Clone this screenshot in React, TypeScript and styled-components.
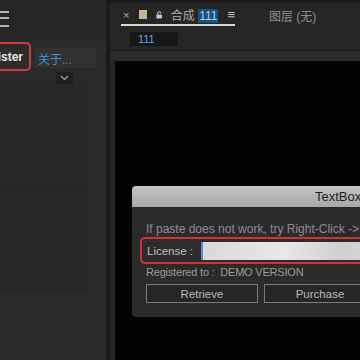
import styled, { createGlobalStyle } from "styled-components";

const GlobalStyle = createGlobalStyle`
  html, body {
    margin: 0;
    padding: 0;
    background: #000;
  }
  body {
    font-family: "Liberation Sans", "Noto Sans CJK SC", sans-serif;
  }
`;

const leftRows = [24, 20, 19, 20, 14, 5, 19, 19, 22, 18, 17];

const App = () => {
  return (
    <Screen>
      <GlobalStyle />
      <LeftPanel>
        <TopBar>
          <Hamburger>
            <span />
            <span />
            <span />
          </Hamburger>
        </TopBar>
        <TabRow>
          <RegisterTab>Register</RegisterTab>
          <AboutTab>关于...</AboutTab>
        </TabRow>
        <DropRow>
          <ChevronBox>
            <svg width="9" height="6" viewBox="0 0 9 6">
              <path d="M1 1l3.5 3.5L8 1" stroke="#9a9a9a" strokeWidth="1.3" fill="none" />
            </svg>
          </ChevronBox>
        </DropRow>
        <RowList>
          {leftRows.map((h, i) => (
            <ListRow key={i} style={{ height: h }} />
          ))}
        </RowList>
      </LeftPanel>
      <Divider />
      <RightPanel>
        <Header>
          <CompTab>
            <Close>×</Close>
            <Swatch />
            <svg width="8" height="10" viewBox="0 0 8 10">
              <path d="M2 4.5V3a2 2 0 0 1 4 0" stroke="#c8c8c8" strokeWidth="1.3" fill="none" />
              <rect x="0.5" y="4.5" width="7" height="5" rx="0.8" fill="#c8c8c8" />
            </svg>
            <TabLabel>
              合成 <Selected>111</Selected>
            </TabLabel>
            <Menu>≡</Menu>
          </CompTab>
          <LayerTab>图层 (无)</LayerTab>
        </Header>
        <SubBar>
          <CrumbBox>111</CrumbBox>
        </SubBar>
        <Band />
        <ViewerWrap>
          <Viewer>
            <Dialog>
              <TitleBar>TextBox</TitleBar>
              <DialogBody>
                <Hint>If paste does not work, try Right-Click -&gt;</Hint>
                <LicenseBox>
                  <FieldLabel>License :</FieldLabel>
                  <LicenseInput />
                </LicenseBox>
                <Registered>Registered to :&nbsp; DEMO VERSION</Registered>
                <ButtonRow>
                  <DlgButton>Retrieve</DlgButton>
                  <DlgButton>Purchase</DlgButton>
                </ButtonRow>
              </DialogBody>
            </Dialog>
          </Viewer>
        </ViewerWrap>
      </RightPanel>
    </Screen>
  );
};

const Screen = styled.div`
  width: 360px;
  height: 360px;
  display: flex;
  overflow: hidden;
  background: #000;
`;

const LeftPanel = styled.div`
  width: 106px;
  flex-shrink: 0;
  background: #2a2a2a;
  display: flex;
  flex-direction: column;
`;

const TopBar = styled.div`
  height: 41px;
  background: #272727;
  padding-top: 11px;
  box-sizing: border-box;
`;

const Hamburger = styled.div`
  width: 9px;
  display: flex;
  flex-direction: column;
  gap: 4px;

  span {
    display: block;
    height: 2px;
    background: #b4b4b4;
  }
  span:last-child {
    margin-top: 2px;
  }
`;

const TabRow = styled.div`
  height: 31px;
  display: flex;
  align-items: center;
  gap: 4px;
`;

const RegisterTab = styled.div`
  margin-left: -33px;
  height: 29px;
  padding: 0 6px 0 6px;
  display: flex;
  align-items: center;
  border: 2px solid #d23a3a;
  border-radius: 5px;
  background: #2c2c2c;
  color: #e6e6e6;
  font-size: 12px;
  font-weight: bold;
  box-sizing: border-box;
`;

const AboutTab = styled.div`
  width: 58px;
  height: 20px;
  margin-top: 3px;
  padding-left: 3px;
  display: flex;
  align-items: center;
  background: #323232;
  color: #3d8fdc;
  font-size: 12px;
`;

const DropRow = styled.div`
  height: 12px;
  display: flex;
  padding-left: 56px;
`;

const ChevronBox = styled.div`
  width: 17px;
  height: 12px;
  background: #202020;
  display: flex;
  align-items: center;
  justify-content: center;
`;

const RowList = styled.div`
  display: flex;
  flex-direction: column;
  width: 88px;
`;

const ListRow = styled.div`
  border-bottom: 1px solid #242424;
  background: #282828;
`;

const Divider = styled.div`
  width: 4px;
  flex-shrink: 0;
  background: #1a1a1a;
`;

const RightPanel = styled.div`
  flex: 1;
  min-width: 0;
  display: flex;
  flex-direction: column;
  background: #262626;
`;

const Header = styled.div`
  height: 28px;
  display: flex;
  align-items: flex-start;
  padding-left: 11px;
  box-sizing: border-box;
  border-top: 3px solid #1c1c1c;
`;

const CompTab = styled.div`
  width: 114px;
  height: 23px;
  padding-top: 2px;
  display: flex;
  align-items: center;
  gap: 9px;
  padding-left: 2px;
  box-sizing: border-box;
  border-bottom: 2px solid #d8d8d8;
`;

const Close = styled.span`
  color: #a8a8a8;
  font-size: 11px;
  margin-right: 1px;
`;

const Swatch = styled.span`
  width: 9px;
  height: 9px;
  background: #c9b28e;
`;

const TabLabel = styled.span`
  color: #a6a6a6;
  font-size: 12px;
  white-space: nowrap;
`;

const Selected = styled.span`
  background: #1c4f7e;
  color: #9fd0ff;
  padding: 0 1px;
`;

const Menu = styled.span`
  color: #c0c0c0;
  font-size: 13px;
`;

const LayerTab = styled.div`
  margin-left: 34px;
  height: 23px;
  padding-top: 2px;
  box-sizing: border-box;
  display: flex;
  align-items: center;
  color: #8e8e8e;
  font-size: 12px;
`;

const SubBar = styled.div`
  height: 23px;
  padding: 4px 0 0 20px;
  box-sizing: border-box;
  border-bottom: 1px solid #171717;
`;

const CrumbBox = styled.div`
  width: 48px;
  height: 14px;
  padding-left: 8px;
  box-sizing: border-box;
  background: #171717;
  color: #5da3e2;
  font-size: 11px;
  line-height: 14px;
`;

const Band = styled.div`
  height: 10px;
  background: #2b2b2b;
`;

const ViewerWrap = styled.div`
  flex: 1;
  padding-left: 5px;
  display: flex;
`;

const Viewer = styled.div`
  flex: 1;
  background: #030303;
  padding: 125px 0 0 17px;
  overflow: hidden;
`;

const Dialog = styled.div`
  width: 270px;
  border-radius: 4px;
  overflow: hidden;
  background: #2b2b2b;
`;

const TitleBar = styled.div`
  height: 21px;
  background: linear-gradient(#c2c2c2, #a8a8a8);
  color: #1e1e1e;
  font-size: 13px;
  line-height: 21px;
  padding-left: 183px;
`;

const DialogBody = styled.div`
  height: 110px;
  padding: 16px 0 0 8px;
  box-sizing: border-box;
  display: flex;
  flex-direction: column;
`;

const Hint = styled.div`
  color: #8e8e8e;
  font-size: 12px;
  padding-left: 6px;
  white-space: nowrap;
  line-height: 13px;
`;

const LicenseBox = styled.div`
  height: 27px;
  margin-top: 1px;
  border: 2px solid #cf3434;
  border-right: none;
  border-radius: 5px 0 0 5px;
  display: flex;
  align-items: center;
  padding-left: 5px;
  gap: 8px;
  box-sizing: border-box;
  background: #2d2b2b;
`;

const FieldLabel = styled.span`
  color: #bdbdbd;
  font-size: 11.5px;
  white-space: nowrap;
`;

const LicenseInput = styled.div`
  flex: 1;
  height: 18px;
  border-left: 2px solid #4a90e2;
  background: linear-gradient(90deg, #d9d9d9, #e8e8e8 40%, #cfcfcf 70%, #e2e2e2);
  filter: blur(0.6px);
`;

const Registered = styled.div`
  color: #9a9a9a;
  font-size: 11px;
  letter-spacing: -0.2px;
  line-height: 13px;
  padding-left: 6px;
  margin-top: 2px;
  white-space: nowrap;
`;

const ButtonRow = styled.div`
  display: flex;
  gap: 6px;
  margin-top: 5px;
  padding-left: 6px;
`;

const DlgButton = styled.div`
  width: 112px;
  height: 19px;
  flex-shrink: 0;
  box-sizing: border-box;
  border: 1px solid #7a7a7a;
  background: #262626;
  color: #b8b8b8;
  font-size: 11.5px;
  display: flex;
  align-items: center;
  justify-content: center;
`;

export default App;
